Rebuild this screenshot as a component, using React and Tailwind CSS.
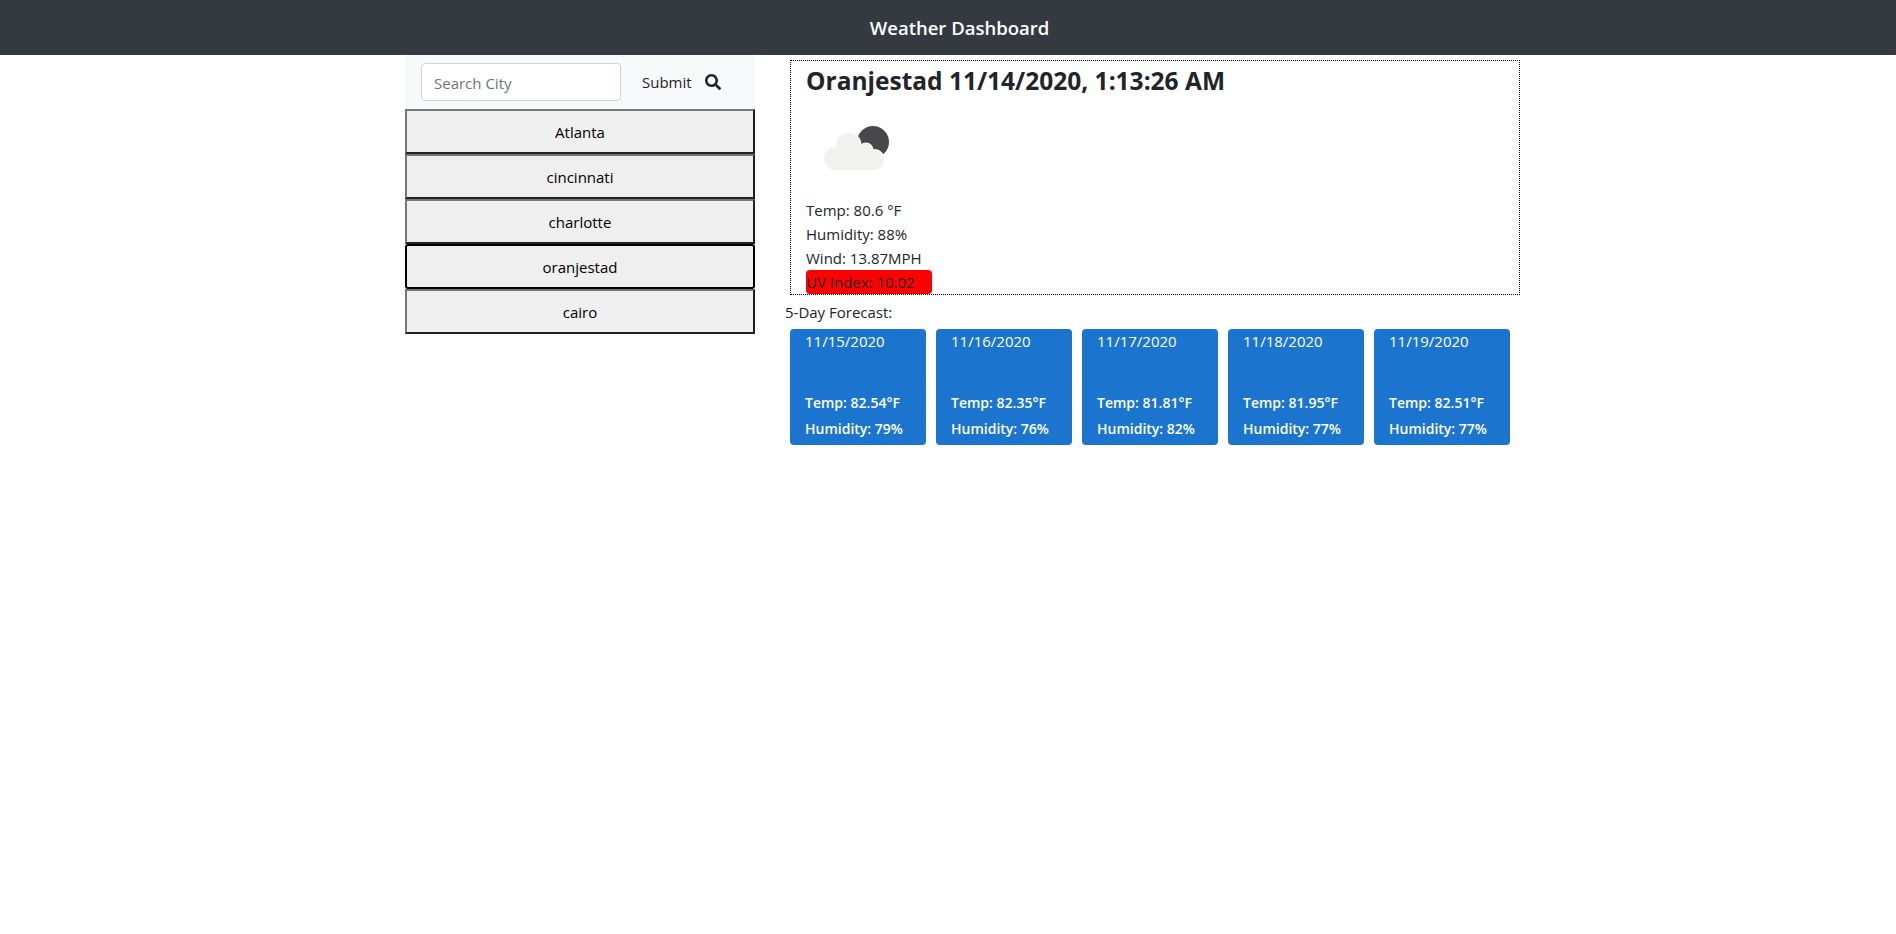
import React from "react";
import { FaSearch } from "react-icons/fa";

const cities = ["Atlanta", "cincinnati", "charlotte", "oranjestad", "cairo"];

const forecast = [
    { date: "11/15/2020", temp: "82.54", humidity: "79" },
    { date: "11/16/2020", temp: "82.35", humidity: "76" },
    { date: "11/17/2020", temp: "81.81", humidity: "82" },
    { date: "11/18/2020", temp: "81.95", humidity: "77" },
    { date: "11/19/2020", temp: "82.51", humidity: "77" },
];

const CloudMoon = () => (
    <svg viewBox="0 0 100 100" className="w-[100px] h-[100px] block">
        <circle cx="67" cy="41" r="16" fill="#48484a" />
        <g fill="#ffffff" stroke="#ffffff" strokeWidth="2">
            <circle cx="42.5" cy="44" r="12" />
            <circle cx="60" cy="49" r="6.5" />
            <circle cx="68" cy="59" r="10" />
        </g>
        <g fill="#f1f1f0">
            <circle cx="42.5" cy="44" r="12" />
            <circle cx="60" cy="49" r="6.5" />
            <circle cx="29.5" cy="57.5" r="11.5" />
            <circle cx="68" cy="59" r="10" />
            <rect x="40" y="46" width="20" height="10" />
            <rect x="29.5" y="52" width="38.5" height="17" />
        </g>
    </svg>
);

const App = () => {
    return (
        <div className="min-h-[934px] bg-white text-[#212529] font-['Open_Sans','Noto_Sans',sans-serif] text-[15px] leading-6">
            <header className="h-[55px] bg-[#343a40] flex items-center justify-center pl-[23px]">
                <h1 className="text-white text-[18.5px] font-semibold">Weather Dashboard</h1>
            </header>

            <div className="flex pl-[405px]">
                {/* City search and history */}
                <aside className="w-[350px]">
                    <div className="h-[54px] bg-[#f8f9fa] flex items-center pl-4">
                        <input
                            placeholder="Search City"
                            className="w-[200px] h-[38px] bg-white border border-[#ced4da] rounded px-3 pt-[2px] placeholder:text-[#6c757d]"
                        />
                        <span className="ml-[21px]">Submit</span>
                        <FaSearch className="ml-[13px] w-4 h-4 text-[#212529]" />
                    </div>
                    {cities.map((city) => (
                        <button
                            key={city}
                            className={
                                city === "oranjestad"
                                    ? "block w-full h-[45px] bg-[#efefef] text-black text-center border-2 border-black rounded-[3px]"
                                    : "block w-full h-[45px] bg-[#efefef] text-black text-center border-2 border-t-[#767676] border-l-[#767676] border-r-[#212121] border-b-[#212121]"
                            }
                        >
                            {city}
                        </button>
                    ))}
                </aside>

                {/* Current weather and forecast */}
                <main className="ml-[31px] w-[734px]">
                    <section className="mt-[5px] ml-[4px] w-[730px] h-[235px] border border-dotted border-black pl-[15px]">
                        <h3 className="text-[24.5px] leading-[40px] font-bold">
                            Oranjestad 11/14/2020, 1:13:26 AM
                        </h3>
                        <CloudMoon />
                        <p className="-mt-[3px]">Temp: 80.6 °F</p>
                        <p>Humidity: 88%</p>
                        <p>Wind: 13.87MPH</p>
                        <p className="w-[126px] bg-[#ff0000] rounded">UV Index: 10.02</p>
                    </section>

                    <p className="mt-[5px] -ml-[1px]">5-Day Forecast:</p>
                    <div className="flex gap-[10px] ml-[4px] mt-[5px]">
                        {forecast.map((day) => (
                            <div
                                key={day.date}
                                className="w-[136px] h-[116px] bg-[#1b75ce] rounded text-white pl-[15px]"
                            >
                                <div>{day.date}</div>
                                <div className="mt-[37px] font-semibold text-[14px] leading-[25px]">
                                    Temp: {day.temp}°F
                                </div>
                                <div className="mt-[1px] font-semibold text-[14px] leading-[25px]">
                                    Humidity: {day.humidity}%
                                </div>
                            </div>
                        ))}
                    </div>
                </main>
            </div>
        </div>
    );
};

export default App;
